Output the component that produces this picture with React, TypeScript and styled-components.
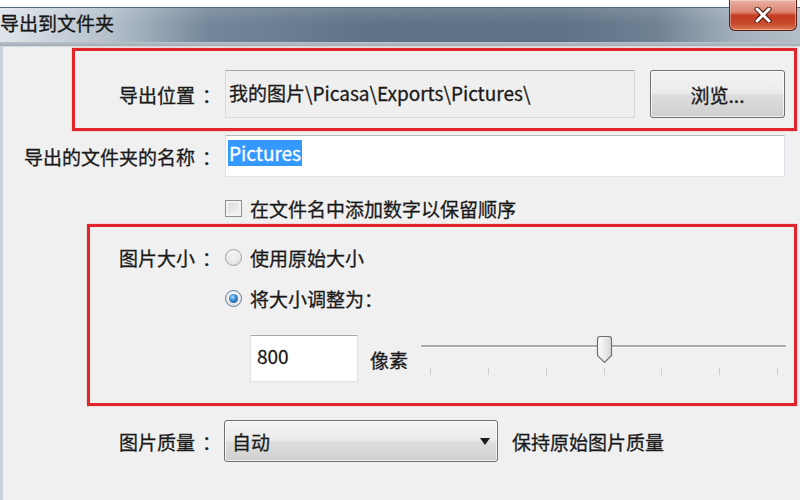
import React from "react";
import styled, { createGlobalStyle } from "styled-components";

const GlobalStyle = createGlobalStyle`
  html, body {
    margin: 0;
    padding: 0;
    background: #f0f0f0;
  }
  body {
    font-family: "Noto Sans CJK SC", "Noto Sans", sans-serif;
    color: #1a1a1a;
  }
`;

const App = () => {
  return (
    <>
      <GlobalStyle />
      <Window>
        <TitleBar>
          <Title>导出到文件夹</Title>
          <CloseButton>
            <svg width="20" height="16" viewBox="0 0 20 16">
              <path
                d="M4 2 L16 14 M16 2 L4 14"
                stroke="#4a1a12"
                strokeWidth="5"
                fill="none"
                strokeLinecap="round"
              />
              <path
                d="M4 2 L16 14 M16 2 L4 14"
                stroke="#fff"
                strokeWidth="3"
                fill="none"
                strokeLinecap="round"
              />
            </svg>
          </CloseButton>
        </TitleBar>
        <FrameLine />

        <Body>
          <Highlight $left={69} $pad="19px 9px 10px 0">
            <Row>
              <Label $w={140}>导出位置</Label>
              <PathField>我的图片\Picasa\Exports\Pictures\</PathField>
              <Button>浏览...</Button>
            </Row>
          </Highlight>

          <Row $top={4}>
            <Label $w={212}>导出的文件夹的名称</Label>
            <NameInput>
              <Selection>Pictures</Selection>
            </NameInput>
          </Row>

          <CheckRow>
            <Checkbox />
            <span>在文件名中添加数字以保留顺序</span>
          </CheckRow>

          <Highlight $left={84} $top={1} $pad="15px 0 21px 0">
            <OptionRow>
              <Label $w={125}>图片大小</Label>
              <Radio />
              <span>使用原始大小</span>
            </OptionRow>
            <OptionRow $indent={135} $top={11}>
              <Radio $checked />
              <span>将大小调整为：</span>
            </OptionRow>
            <SizeRow>
              <NumberInput>800</NumberInput>
              <Unit>像素</Unit>
              <Slider>
                <Track />
                <Thumb>
                  <svg width="17" height="29" viewBox="0 0 17 29">
                    <defs>
                      <linearGradient id="thumbFill" x1="0" y1="0" x2="1" y2="0">
                        <stop offset="0" stopColor="#fdfdfd" />
                        <stop offset="0.5" stopColor="#ececec" />
                        <stop offset="1" stopColor="#d6d6d6" />
                      </linearGradient>
                    </defs>
                    <path
                      d="M1.5 4 Q1.5 1.5 4 1.5 H13 Q15.5 1.5 15.5 4 V20.5 L8.5 27.5 L1.5 20.5 Z"
                      fill="url(#thumbFill)"
                      stroke="#6f6f6f"
                      strokeWidth="1.2"
                    />
                  </svg>
                </Thumb>
                <Ticks>
                  {Array.from({ length: 7 }).map((_, i) => (
                    <Tick key={i} />
                  ))}
                </Ticks>
              </Slider>
            </SizeRow>
          </Highlight>

          <Row $top={14}>
            <Label $w={212} $gap={9}>
              图片质量
            </Label>
            <Combo>
              <span>自动</span>
              <svg width="10" height="7" viewBox="0 0 10 7">
                <path d="M0 0 H10 L5 7 Z" fill="#1a1a1a" />
              </svg>
            </Combo>
            <Hint>保持原始图片质量</Hint>
          </Row>
        </Body>
      </Window>
    </>
  );
};

const Window = styled.div`
  width: 800px;
  height: 500px;
  overflow: hidden;
  background: #f0f0f0;
  display: flex;
  flex-direction: column;
  font-size: 19px;
  -webkit-text-stroke: 0.3px currentColor;
`;

const TitleBar = styled.div`
  flex: none;
  height: 42px;
  display: flex;
  justify-content: space-between;
  align-items: flex-start;
  background:
    linear-gradient(to bottom, #ffffff 0 7px, #55687b 7px 8px, rgba(255, 255, 255, 0.12) 8px, rgba(255, 255, 255, 0) 24px),
    linear-gradient(
      to right,
      #dfe5eb 0%,
      #b3bfcb 14%,
      #74879a 26%,
      #607488 45%,
      #5e7286 70%,
      #6f8193 82%,
      #a4b0bd 92%,
      #b4bec8 100%
    );
`;

const Title = styled.div`
  margin-top: 8px;
  line-height: 30px;
  color: #151515;
`;

const CloseButton = styled.div`
  width: 68px;
  height: 31px;
  margin-right: 3px;
  box-sizing: border-box;
  border: 1px solid #5c2016;
  border-top: none;
  border-radius: 0 0 6px 6px;
  display: flex;
  align-items: center;
  justify-content: center;
  background: linear-gradient(
    to bottom,
    #eab1a3 0%,
    #dc8470 40%,
    #c43c22 52%,
    #c84a2e 80%,
    #e07a52 100%
  );
  box-shadow: inset 0 0 0 1px rgba(255, 255, 255, 0.35);
`;

const FrameLine = styled.div`
  flex: none;
  height: 4px;
  background: linear-gradient(to bottom, #b9c1ca, #a3adb7);
  border-bottom: 1px solid #d4d9de;
`;

const Body = styled.div`
  flex: 1;
  display: flex;
  flex-direction: column;
  border-left: 3px solid #c7d1dc;
  padding-top: 1px;
`;

const Highlight = styled.div<{ $left: number; $top?: number; $pad: string }>`
  margin: ${(p) => p.$top ?? 0}px 0 0 ${(p) => p.$left}px;
  width: calc(100% - ${(p) => p.$left + 3}px);
  box-sizing: border-box;
  border: 3px solid #e1252d;
  box-shadow: 0 0 1px rgba(225, 37, 45, 0.6);
  padding: ${(p) => p.$pad};
  display: flex;
  flex-direction: column;
`;

const Row = styled.div<{ $top?: number }>`
  display: flex;
  align-items: center;
  margin-top: ${(p) => p.$top ?? 0}px;
`;

const Label = styled.div<{ $w: number; $gap?: number }>`
  flex: none;
  width: ${(p) => p.$w}px;
  margin-right: ${(p) => p.$gap ?? 10}px;
  text-align: right;
  white-space: nowrap;

  &::after {
    content: "：";
    margin-left: 7px;
    margin-right: -6px;
  }
`;

const PathField = styled.div`
  width: 410px;
  height: 48px;
  box-sizing: border-box;
  border: 1px solid #dadada;
  border-top-color: #a9a9a9;
  background: #efefef;
  padding: 0 0 4px 3px;
  display: flex;
  align-items: center;
  white-space: nowrap;
`;

const Button = styled.div`
  width: 135px;
  height: 48px;
  margin-left: 15px;
  box-sizing: border-box;
  border: 1px solid #707070;
  border-radius: 3px;
  background: linear-gradient(to bottom, #f3f3f3 0%, #ebebeb 48%, #dddddd 52%, #cfcfcf 100%);
  box-shadow: inset 0 0 0 1px rgba(255, 255, 255, 0.7);
  display: flex;
  align-items: center;
  justify-content: center;
`;

const NameInput = styled.div`
  width: 560px;
  height: 42px;
  box-sizing: border-box;
  background: #ffffff;
  border: 1px solid #dfe4ea;
  border-top-color: #b6b9be;
  padding: 4px 2px;
  display: flex;
  align-items: flex-start;
`;

const Selection = styled.span`
  background: #3399ff;
  color: #ffffff;
  line-height: 26px;
  padding: 0 1px;
`;

const CheckRow = styled.div`
  display: flex;
  align-items: center;
  height: 30px;
  margin: 16px 0 0 222px;
`;

const Checkbox = styled.span`
  flex: none;
  width: 15px;
  height: 15px;
  margin-right: 8px;
  border: 1px solid #8e8f8f;
  background: linear-gradient(135deg, #d9d9d9, #f8f8f8);
  box-shadow: inset 0 0 0 2px #f4f4f4;
`;

const OptionRow = styled.div<{ $indent?: number; $top?: number }>`
  display: flex;
  align-items: center;
  height: 30px;
  padding-left: ${(p) => p.$indent ?? 0}px;
  margin-top: ${(p) => p.$top ?? 0}px;
`;

const Radio = styled.span<{ $checked?: boolean }>`
  flex: none;
  position: relative;
  width: 15px;
  height: 15px;
  margin-right: 8px;
  border-radius: 50%;
  border: 1px solid ${(p) => (p.$checked ? "#5f7c99" : "#a3a3a3")};
  background: radial-gradient(circle at 50% 35%, #ffffff, #d8d8d8);

  &::after {
    content: "";
    position: absolute;
    inset: 3px;
    border-radius: 50%;
    background: ${(p) =>
      p.$checked
        ? "radial-gradient(circle at 40% 35%, #a8dcff 0%, #3b8fd6 40%, #0d3f7a 100%)"
        : "radial-gradient(circle, #f8f8f8, #e2e2e2)"};
  }
`;

const SizeRow = styled.div`
  display: flex;
  align-items: center;
  padding-left: 160px;
  margin-top: 22px;
`;

const NumberInput = styled.div`
  width: 108px;
  height: 47px;
  box-sizing: border-box;
  background: #ffffff;
  border: 1px solid #e3e3e3;
  border-top-color: #a8a8a8;
  padding: 0 0 6px 6px;
  display: flex;
  align-items: center;
`;

const Unit = styled.span`
  margin: 0 13px 0 12px;
  padding-top: 1px;
`;

const Slider = styled.div`
  position: relative;
  width: 365px;
  height: 47px;
  align-self: flex-start;
`;

const Track = styled.div`
  margin-top: 10px;
  height: 2px;
  background: #a9a9a9;
  border-bottom: 1px solid #ffffff;
  border-radius: 1px;
`;

const Thumb = styled.div`
  position: absolute;
  left: 175px;
  top: 0;
  width: 17px;
  height: 29px;
  line-height: 0;
`;

const Ticks = styled.div`
  display: flex;
  justify-content: space-between;
  margin-top: 20px;
  padding: 0 8px 0 9px;
`;

const Tick = styled.span`
  width: 1px;
  height: 7px;
  background: #cdcdcd;
`;

const Combo = styled.div`
  width: 274px;
  height: 42px;
  box-sizing: border-box;
  border: 1px solid #707070;
  border-radius: 3px;
  background: linear-gradient(to bottom, #f4f4f4 0%, #ebebeb 48%, #dddddd 52%, #d0d0d0 100%);
  box-shadow: inset 0 0 0 1px rgba(255, 255, 255, 0.7);
  padding: 0 7px 0 7px;
  display: flex;
  align-items: center;
  justify-content: space-between;
`;

const Hint = styled.span`
  margin-left: 14px;
`;

export default App;
